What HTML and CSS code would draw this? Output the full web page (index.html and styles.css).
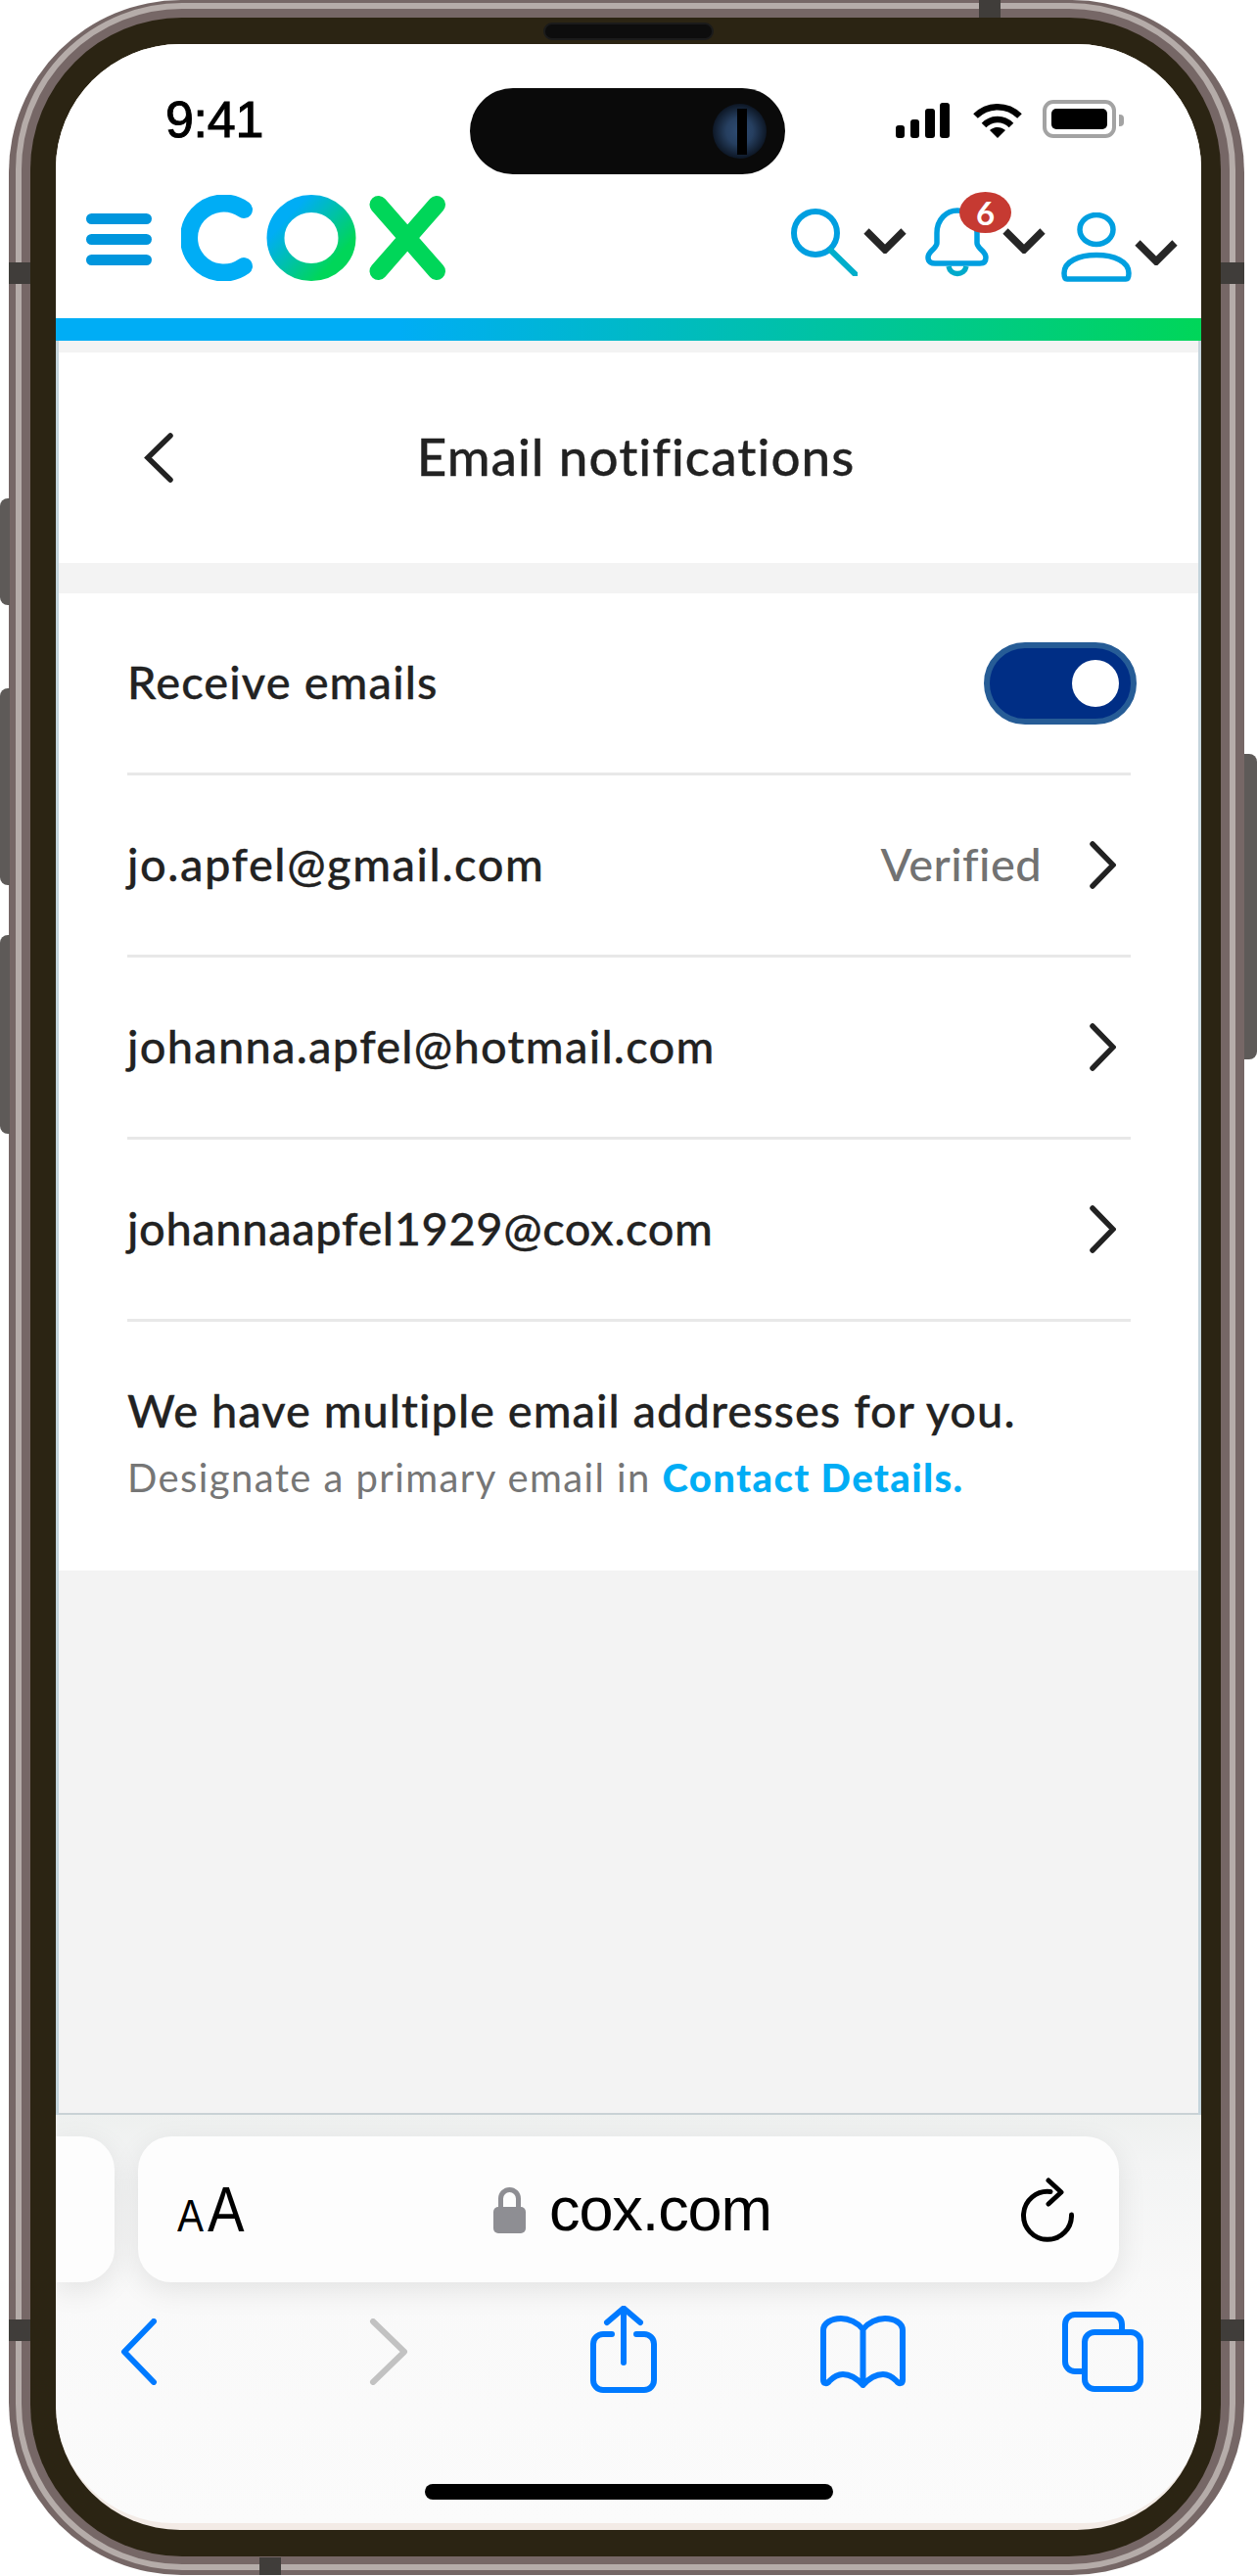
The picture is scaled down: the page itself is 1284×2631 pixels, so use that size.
FILE: index.html
```html
<!DOCTYPE html>
<html lang="en">
<head>
<meta charset="utf-8">
<title>Email notifications</title>
<link rel="stylesheet" href="styles.css">
</head>
<body>
<div class="phone">
  <span class="band"></span>
  <span class="btn btn-a"></span><span class="btn btn-b"></span><span class="btn btn-c"></span><span class="btn btn-r"></span>
  <span class="ant ant-lt"></span><span class="ant ant-rt"></span><span class="ant ant-lb"></span><span class="ant ant-rb"></span>
  <span class="notch notch-t"></span><span class="notch notch-b"></span>
  <div class="bezel">
    <span class="speaker"></span>
    <div class="screen">
      <div class="status">
        <div class="time">9:41</div>
        <div class="island"><span class="camera"></span></div>
        <div class="status-icons">
          <svg class="signal" width="55" height="36" viewBox="0 0 55 36"><rect x="0" y="23" width="9" height="13" rx="3"/><rect x="15" y="17" width="9" height="19" rx="3"/><rect x="30" y="6" width="10" height="30" rx="3"/><rect x="45" y="0" width="10" height="36" rx="3"/></svg>
          <svg class="wifi" width="52" height="36" viewBox="0 0 52 36"><path class="wifi-arc" d="M3.5 13.5C16 1 36 1 48.5 13.5"/><path class="wifi-arc" d="M12 23C20 15 32 15 40 23"/><path d="M26 36L18 28C23 24 29 24 34 28Z"/></svg>
          <div class="battery"><span class="battery-fill"></span></div>
          <span class="battery-nub"></span>
        </div>
      </div>
      <nav class="nav">
        <div class="burger"><span></span><span></span><span></span></div>
        <svg class="logo" width="272" height="88" viewBox="0 0 272 88" fill="none" stroke-width="18" stroke-linecap="round">
          <defs><linearGradient id="og" gradientUnits="userSpaceOnUse" x1="105" y1="15" x2="165" y2="70"><stop offset="0.1" stop-color="#00adf5"/><stop offset="0.9" stop-color="#00d659"/></linearGradient></defs>
          <path stroke="#00adf5" d="M64 15A35.500 35.500 0 1 0 64 73"/>
          <ellipse stroke="url(#og)" cx="133" cy="44" rx="36.500" ry="35"/>
          <path stroke="#00d659" d="M201.500 10L261 78M261 10L201.500 78"/>
        </svg>
        <svg class="i-search" width="68" height="69" viewBox="0 0 68 69" fill="none" stroke="#009fe0" stroke-width="6"><circle cx="25" cy="25" r="22"/><path stroke="#00aecb" stroke-linecap="round" d="M41 43L65.500 67"/></svg>
        <svg class="chev chev-1" width="44" height="26" viewBox="0 0 44 26"><path d="M3 3L22 22L41 3"/></svg>
        <div class="bell">
          <svg width="66" height="72" viewBox="0 0 66 72" fill="none" stroke="#009fe0" stroke-width="5.500"><path d="M12 26C12 12 22 3 33 3C44 3 53 12 53 26V36C53 42 62 44 62 51C62 56 59 57 56 57H10C7 57 3 56 3 51C3 44 12 42 12 36Z"/><path stroke="#00aacb" d="M24 60C26 70 40 70 42 60"/></svg>
          <span class="badge">6</span>
        </div>
        <svg class="chev chev-2" width="44" height="26" viewBox="0 0 44 26"><path d="M3 3L22 22L41 3"/></svg>
        <svg class="i-user" width="72" height="71" viewBox="0 0 72 71" fill="none" stroke="#009fe0" stroke-width="5.500"><ellipse cx="36" cy="17.500" rx="17" ry="15"/><path d="M3 62C3 50 18 43.500 36 43.500C54 43.500 69 50 69 62C69 66 68 68 66 68H6C4 68 3 66 3 62Z"/></svg>
        <svg class="chev chev-3" width="44" height="26" viewBox="0 0 44 26"><path d="M3 3L22 22L41 3"/></svg>
      </nav>
      <div class="rainbow"></div>
      <main class="content">
        <header class="title-card">
          <svg class="back" width="30" height="51" viewBox="0 0 30 51"><path d="M27 3L4 25.500L27 48"/></svg>
          <h1 class="title">Email notifications</h1>
        </header>
        <section class="card">
          <div class="row"><span class="label">Receive emails</span><span class="toggle"><span class="knob"></span></span></div>
          <div class="row"><span class="label label-loose">jo.apfel@gmail.com</span><span class="verified">Verified</span>
            <svg class="go" width="27" height="49" viewBox="0 0 27 49"><path d="M3 3L24 24.500L3 46"/></svg></div>
          <div class="row"><span class="label label-mid">johanna.apfel@hotmail.com</span>
            <svg class="go" width="27" height="49" viewBox="0 0 27 49"><path d="M3 3L24 24.500L3 46"/></svg></div>
          <div class="row"><span class="label label-tight">johannaapfel1929@cox.com</span>
            <svg class="go" width="27" height="49" viewBox="0 0 27 49"><path d="M3 3L24 24.500L3 46"/></svg></div>
          <div class="note">
            <p class="note-main">We have multiple email addresses for you.</p>
            <p class="note-sub">Designate a primary email in <a class="link" href="#">Contact Details.</a></p>
          </div>
        </section>
      </main>
      <footer class="toolbar">
        <div class="url-row">
          <div class="prev-tab"></div>
          <div class="url-bar">
            <span class="aa"><span class="aa-s">A</span><span class="aa-b">A</span></span>
            <svg class="lock" width="33" height="48" viewBox="0 0 33 48"><path fill="none" stroke="#8e8e93" stroke-width="5" d="M7.500 24V12.500a9 9 0 0 1 18 0V24"/><rect y="21" width="33" height="27" rx="5" fill="#8e8e93"/></svg>
            <span class="url">cox.com</span>
            <svg class="reload" width="54" height="66" viewBox="0 0 54 66" fill="none" stroke="#000" stroke-width="5" stroke-linecap="round" stroke-linejoin="round"><path d="M51.500 38A24.500 24.500 0 1 1 30 14.500"/><path d="M28 3L41 15L28 27"/></svg>
          </div>
        </div>
        <div class="tools">
          <svg width="38" height="68" viewBox="0 0 38 68" class="t-blue"><path d="M34 3L4 34L34 65"/></svg>
          <svg width="40" height="68" viewBox="0 0 40 68" class="t-grey"><path d="M4 3L36 34L4 65"/></svg>
          <svg width="70" height="90" viewBox="0 0 70 90" class="t-blue t-share"><path d="M35 3V58M18 17L35 2.500L52 17M23 29H14A10 10 0 0 0 4 39V76A10 10 0 0 0 14 86H56A10 10 0 0 0 66 76V39A10 10 0 0 0 56 29H48"/></svg>
          <svg width="87" height="74" viewBox="0 0 87 74" class="t-blue"><path d="M43.500 14C38 7 29 3 21 3C11 3 3 8 3 15V66C3 70 7 70 9 67C14 62 18 60 23 60C30 60 38 65 43.500 71C49 65 57 60 64 60C69 60 73 62 78 67C80 70 84 70 84 66V15C84 8 76 3 66 3C58 3 49 7 43.500 14V71"/></svg>
          <svg width="83" height="82" viewBox="0 0 83 82" class="t-blue"><path d="M61 18V13A10 10 0 0 0 51 3H13A10 10 0 0 0 3 13V51A10 10 0 0 0 13 61H20"/><rect x="23" y="21" width="57" height="58" rx="10"/></svg>
        </div>
        <div class="home"></div>
      </footer>
    </div>
  </div>
</div>
</body>
</html>
```
FILE: styles.css
```css
* { box-sizing: border-box; }
html, body { margin: 0; padding: 0; background: #fff; }
body { width: 1284px; height: 2631px; overflow: hidden; font-family: "Lato", "Liberation Sans", sans-serif; color: #222; }

.phone { position: relative; margin-left: 9px; width: 1262px; height: 2630px; padding: 18px 24px 19px 22px; background: #766766; border-radius: 176px; }
.band { position: absolute; left: 7px; top: 3px; right: 9px; bottom: 5px; border: 6px solid #b5aca9; border-radius: 170px; }
.bezel { position: relative; height: 100%; padding: 27px 20px 27px 26px; background: #2b2413; border-radius: 155px; }
.speaker { position: absolute; left: 524px; top: 5px; width: 174px; height: 18px; border-radius: 9px; background: #0d0d0d; border: 2px solid #1b1b1b; }

.btn { position: absolute; background: #5e5a58; width: 10px; }
.btn-a { left: -9px; top: 509px; height: 109px; border-radius: 8px 0 0 8px; }
.btn-b { left: -9px; top: 703px; height: 201px; border-radius: 8px 0 0 8px; }
.btn-c { left: -9px; top: 955px; height: 203px; border-radius: 8px 0 0 8px; }
.btn-r { right: -13px; top: 770px; width: 13px; height: 312px; border-radius: 0 8px 8px 0; }
.ant { position: absolute; background: #403d3a; height: 22px; }
.ant-lt { left: 0; top: 268px; width: 22px; }
.ant-rt { right: 0; top: 268px; width: 24px; }
.ant-lb { left: 0; top: 2369px; width: 22px; }
.ant-rb { right: 0; top: 2369px; width: 24px; }
.notch { position: absolute; background: #403d3a; width: 22px; }
.notch-t { left: 991px; top: 0; height: 18px; }
.notch-b { left: 256px; bottom: 0; height: 18px; }

.screen { display: flex; flex-direction: column; width: 1170px; height: 2539px; overflow: hidden; border-radius: 127px; background: #f3ebe6; }

.status { display: flex; flex: none; height: 150px; background: #fff; padding-left: 112px; }
.time { width: 311px; font: 400 52px/1 "Liberation Sans", sans-serif; color: #000; -webkit-text-stroke: 1px #000; letter-spacing: -0.3px; margin-top: 51px; height: 52px; }
.island { display: flex; align-items: center; justify-content: flex-end; width: 322px; height: 88px; margin-top: 45px; padding-right: 19px; border-radius: 44px; background: #0a0a0a; }
.camera { position: relative; width: 55px; height: 56px; border-radius: 50%; background: radial-gradient(circle, #2f4c72 0, #263f60 35%, #0a121e 75%, #060a12 100%); }
.camera::after { content: ""; position: absolute; left: 25px; top: 5px; width: 10px; height: 47px; background: #000; }
.status-icons { display: flex; align-items: flex-start; margin-left: 113px; margin-top: 60px; }
.wifi { margin-left: 23px; }
.wifi path { fill: #000; }
.wifi .wifi-arc { fill: none; stroke: #000; stroke-width: 6.5; }
.battery { width: 75px; height: 39px; margin-left: 20px; margin-top: -3px; padding: 5px; border: 4px solid #a3a3a3; border-radius: 11px; }
.battery-fill { display: block; height: 100%; background: #000; border-radius: 5px; }
.battery-nub { width: 5px; height: 12px; margin-left: 3px; margin-top: 12px; background: #a3a3a3; border-radius: 0 4px 4px 0; }

.nav { display: flex; flex: none; align-items: flex-start; height: 130px; background: #fff; padding-left: 31px; }
.burger { display: flex; flex-direction: column; gap: 10px; width: 67px; margin-top: 23px; }
.burger span { height: 11px; border-radius: 6px; background: #0096dd; }
.logo { margin-left: 30px; margin-top: 4px; }
.i-search { margin-left: 351px; margin-top: 18px; }
.chev { fill: none; stroke: #262626; stroke-width: 7.500; }
.chev-1 { margin-left: 6px; margin-top: 38px; }
.bell { position: relative; width: 66px; height: 72px; margin-left: 19px; margin-top: 17px; }
.badge { position: absolute; left: 35px; top: -16px; width: 53px; height: 42px; border-radius: 50%; background: #c63a32; color: #fff; font: 700 33px/42px "Lato", sans-serif; text-align: center; }
.chev-2 { margin-left: 13px; margin-top: 38px; }
.i-user { margin-left: 16px; margin-top: 22px; }
.chev-3 { margin-left: 3px; margin-top: 50px; }

.rainbow { flex: none; height: 23px; background: linear-gradient(90deg, #00adf5 0, #00adf5 30%, #00d659 100%); }

.content { flex: none; height: 1812px; padding: 12px 3px 0; background: #f3f3f3; position: relative; box-shadow: inset 3px 0 0 #c4d4dc, inset -3px 0 0 #c4d4dc, inset 0 -2px 0 #c9d2d5; }
.title-card { display: flex; align-items: center; height: 215px; padding: 0 102px 0 87px; background: #fff; }
.back { fill: none; stroke: #222; stroke-width: 5.500; stroke-linecap: round; }
.title { flex: 1; margin: 0; padding-bottom: 3px; text-align: center; font-weight: 500; font-size: 53px; letter-spacing: 1px; line-height: 1.2; -webkit-text-stroke: 0.3px #222; }
.card { margin-top: 31px; height: 998px; background: #fff; }
.row { display: flex; align-items: center; height: 186px; margin: 0 69px 0 70px; border-bottom: 3px solid #e8e8e8; padding-right: 15px; }
.row:first-child { padding-right: 0; }
.label { flex: 1; padding-bottom: 3px; font-size: 47px; font-weight: 500; letter-spacing: 1.1px; -webkit-text-stroke: 0.3px #222; }
.label-loose { letter-spacing: 1.55px; }
.label-mid { letter-spacing: 1.25px; }
.label-tight { letter-spacing: 0.6px; }
.verified { padding-bottom: 3px; font-size: 47px; font-weight: 500; letter-spacing: 0.4px; color: #727272; margin-right: 49px; }
.go { fill: none; stroke: #222; stroke-width: 5.500; stroke-linecap: round; }
.toggle { display: flex; align-items: center; justify-content: flex-end; width: 156px; height: 84px; margin-right: -6px; padding-right: 12px; border: 6px solid #265c96; border-radius: 42px; background: #002e85; }
.knob { width: 48px; height: 48px; border-radius: 50%; background: #fff; }
.note { margin: 0 69px 0 70px; padding-top: 62px; }
.note-main { margin: 0; font-size: 47px; font-weight: 500; letter-spacing: 1px; line-height: 56px; -webkit-text-stroke: 0.3px #222; }
.note-sub { margin: 16px 0 0; font-size: 40px; font-weight: 400; letter-spacing: 1.4px; line-height: 50px; color: #767676; }
.link { color: #00adf5; font-weight: 900; text-decoration: none; }

.toolbar { position: relative; flex: none; height: 417px; padding-top: 22px; border-radius: 0 0 120px 120px; background: linear-gradient(180deg, #eef0ef 0, #f3f4f4 12%, #f9f9f9 45%, #fbfbfb 100%); }
.url-row { display: flex; gap: 24px; height: 149px; }
.prev-tab { flex: none; width: 60px; border-radius: 0 34px 34px 0; background: #fdfdfd; box-shadow: 0 8px 30px rgba(0,0,0,.09); }
.url-bar { display: flex; flex: none; align-items: center; width: 1002px; padding: 0 46px 0 40px; border-radius: 34px; background: #fdfdfd; box-shadow: 0 8px 30px rgba(0,0,0,.09); }
.aa { display: flex; align-items: baseline; width: 70px; font-family: "Liberation Sans", sans-serif; color: #000; }
.aa-s { font-size: 46px; line-height: 1; width: 34px; transform: scaleX(.88); transform-origin: 0 50%; }
.aa-b { font-size: 64px; line-height: 1; transform: scaleX(.88); transform-origin: 0 50%; }
.lock { margin-left: 253px; }
.url { margin-left: 24px; font: 400 63px/1 "Liberation Sans", sans-serif; letter-spacing: -1.1px; color: #000; }
.reload { margin-left: auto; }
.tools { display: grid; grid-template-columns: 254px 225px 236px 247px auto; align-items: center; height: 90px; margin-top: 26px; padding-left: 66px; }
.tools svg { fill: none; stroke-width: 6; stroke-linecap: round; stroke-linejoin: round; }
.t-blue { stroke: #007aff; }
.t-grey { stroke: #c2c2c2; }
.t-share { margin-top: -5px; }
.home { position: absolute; left: 377px; top: 377px; width: 417px; height: 16px; border-radius: 8px; background: #000; }
```
